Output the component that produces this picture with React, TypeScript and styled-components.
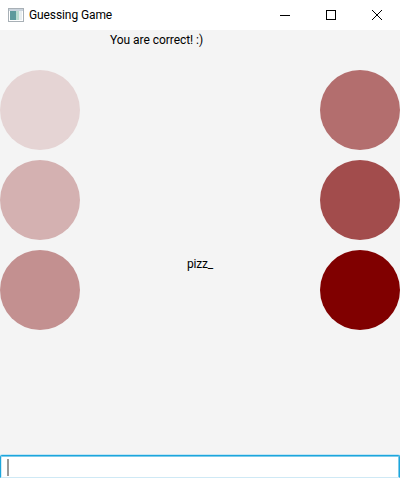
import styled, { createGlobalStyle } from 'styled-components';
import { useState } from 'react';

const GlobalStyle = createGlobalStyle`
  html, body, #root {
    margin: 0;
    height: 100%;
  }
  body {
    font-family: Roboto, "Liberation Sans", sans-serif;
    font-size: 12px;
    color: #000;
    overflow: hidden;
  }
`;

const Window = styled.div`
  display: flex;
  flex-direction: column;
  width: 400px;
  height: 478px;
  background: #f4f4f4;
`;

const TitleBar = styled.div`
  display: flex;
  align-items: center;
  height: 30px;
  padding-left: 8px;
  background: #fff;
`;

const AppIcon = styled.svg`
  width: 16px;
  height: 14px;
  margin-right: 5px;
`;

const Title = styled.span`
  flex: 1;
  line-height: 30px;
  letter-spacing: -0.1px;
`;

const WinButton = styled.button`
  display: flex;
  align-items: center;
  justify-content: center;
  width: 46px;
  height: 30px;
  padding: 0;
  border: 0;
  background: transparent;
`;

const Board = styled.main`
  flex: 1;
  display: grid;
  grid-template-columns: 80px 1fr 80px;
`;

const CircleColumn = styled.div`
  display: flex;
  flex-direction: column;
  gap: 10px;
  padding-top: 40px;
`;

const Circle = styled.div<{ $color: string }>`
  width: 80px;
  height: 80px;
  border-radius: 50%;
  background: ${(p) => p.$color};
`;

const Middle = styled.div`
  display: flex;
  flex-direction: column;
`;

const Message = styled.div`
  padding: 1px 0 0 30px;
  height: 18px;
  line-height: 18px;
  letter-spacing: -0.05px;
`;

const Word = styled.div`
  margin-top: 206px;
  line-height: 18px;
  text-align: center;
  letter-spacing: -0.2px;
`;

const InputWrap = styled.div`
  position: relative;
  height: 23px;
`;

const GuessInput = styled.input`
  display: block;
  box-sizing: border-box;
  width: 400px;
  height: 23px;
  padding: 0 6px;
  border: 1px solid #1ba6dd;
  border-bottom-color: #cfe9f5;
  border-radius: 2px 2px 0 0;
  outline: none;
  background: #fff;
  box-shadow: 0 -1px 0 #c4e5f3, inset 0 1px 0 #7fcbea, inset 1px 0 0 #d2ecf7, inset -1px 0 0 #7fcbea;
  caret-color: transparent;
  font: inherit;
`;

const Caret = styled.span`
  position: absolute;
  left: 7px;
  top: 4px;
  width: 2px;
  height: 17px;
  background: #999;
`;

const leftColors = ['#e5d4d4', '#d4b1b1', '#c39090'];
const rightColors = ['#b36e6e', '#a24c4c', '#800000'];

export default function App() {
  const [guess, setGuess] = useState('');

  return (
    <>
      <GlobalStyle />
      <Window>
        <TitleBar>
          <AppIcon viewBox="0 0 16 14">
            <rect x="0.5" y="0.5" width="15" height="13" fill="#fff" stroke="#a8b0b6" />
            <rect x="1" y="1" width="14" height="2" fill="#c9d3dc" />
            <rect x="2" y="3" width="6" height="9" fill="#5c9a9c" />
            <rect x="8" y="3" width="3" height="9" fill="#b8dccf" />
            <rect x="11" y="3" width="3" height="9" fill="#e8eef0" />
          </AppIcon>
          <Title>Guessing Game</Title>
          <WinButton aria-label="Minimize">
            <svg width="10" height="10" viewBox="0 0 10 10">
              <path d="M0 5.5H10" stroke="#000" fill="none" />
            </svg>
          </WinButton>
          <WinButton aria-label="Maximize">
            <svg width="10" height="10" viewBox="0 0 10 10">
              <rect x="0.5" y="0.5" width="9" height="9" stroke="#000" fill="none" />
            </svg>
          </WinButton>
          <WinButton aria-label="Close">
            <svg width="10" height="10" viewBox="0 0 10 10">
              <path d="M0 0L10 10M10 0L0 10" stroke="#000" fill="none" />
            </svg>
          </WinButton>
        </TitleBar>
        <Board>
          <CircleColumn>
            {leftColors.map((color) => (
              <Circle key={color} $color={color} />
            ))}
          </CircleColumn>
          <Middle>
            <Message>You are correct! :)</Message>
            <Word>pizz_</Word>
          </Middle>
          <CircleColumn>
            {rightColors.map((color) => (
              <Circle key={color} $color={color} />
            ))}
          </CircleColumn>
        </Board>
        <InputWrap>
          <GuessInput value={guess} onChange={(e) => setGuess(e.target.value)} autoFocus />
          <Caret />
        </InputWrap>
      </Window>
    </>
  );
}
